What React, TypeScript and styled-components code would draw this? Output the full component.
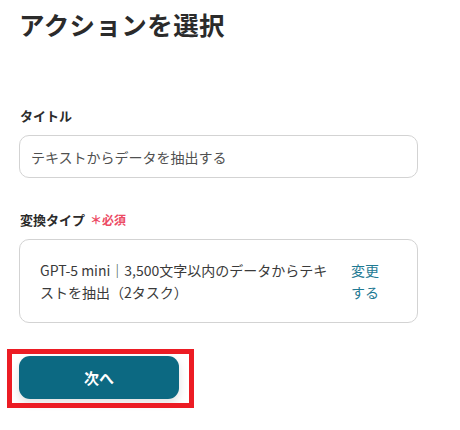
import React from "react";
import styled, { createGlobalStyle } from "styled-components";

const GlobalStyle = createGlobalStyle`
  html, body {
    margin: 0;
    padding: 0;
    background: #ffffff;
  }
  body {
    font-family: "Noto Sans CJK JP", "Noto Sans", sans-serif;
    color: #2b2b2b;
  }
`;

const Page = styled.div`
  width: 460px;
  height: 430px;
  padding: 6px 42px 0 19px;
  box-sizing: border-box;
  display: flex;
  flex-direction: column;
`;

const Title = styled.h1`
  margin: 0;
  font-size: 25.5px;
  line-height: 36px;
  font-weight: 700;
  color: #2b2b2b;
  letter-spacing: 0.4px;
`;

const Field = styled.div<{ $top: number }>`
  display: flex;
  flex-direction: column;
  margin-top: ${(p) => p.$top}px;
`;

const Label = styled.div`
  display: flex;
  align-items: center;
  gap: 5px;
  font-size: 13px;
  line-height: 20px;
  font-weight: 700;
  color: #2b2b2b;
  padding-left: 1px;
`;

const Required = styled.span`
  font-size: 12px;
  font-weight: 700;
  color: #ec4a63;
`;

const TextBox = styled.div`
  margin-top: 9px;
  height: 43px;
  border: 1px solid #d3d3d3;
  border-radius: 10px;
  box-sizing: border-box;
  display: flex;
  align-items: center;
  padding: 0 11px;
  font-size: 14px;
  color: #505050;
`;

const SelectBox = styled.div`
  margin-top: 9px;
  height: 84px;
  border: 1px solid #d3d3d3;
  border-radius: 10px;
  box-sizing: border-box;
  display: flex;
  align-items: center;
  padding: 0 36px 0 20px;
  gap: 16px;
`;

const SelectText = styled.div`
  flex: 1;
  font-size: 14px;
  line-height: 22px;
  color: #3a3a3a;
`;

const ChangeLink = styled.a`
  width: 30px;
  font-size: 14px;
  line-height: 22px;
  color: #1f7a93;
  text-decoration: none;
  cursor: pointer;
`;

const ButtonArea = styled.div`
  position: relative;
  margin-top: 33px;
  align-self: flex-start;
`;

const NextButton = styled.button`
  width: 160px;
  height: 43px;
  border: none;
  border-radius: 11px;
  background: #0c6982;
  color: #ffffff;
  font-family: "Noto Sans CJK JP", "Noto Sans", sans-serif;
  font-size: 15px;
  font-weight: 700;
  box-shadow: 0 4px 10px rgba(0, 0, 0, 0.12);
  cursor: pointer;
`;

const Highlight = styled.div`
  position: absolute;
  left: -12px;
  top: -7px;
  width: 187px;
  height: 59px;
  box-sizing: border-box;
  border: 5px solid #ec1c24;
  pointer-events: none;
`;

export default function App() {
  return (
    <>
      <GlobalStyle />
      <Page>
        <Title>アクションを選択</Title>
        <Field $top={64}>
          <Label>タイトル</Label>
          <TextBox>テキストからデータを抽出する</TextBox>
        </Field>
        <Field $top={32}>
          <Label>
            変換タイプ<Required>＊必須</Required>
          </Label>
          <SelectBox>
            <SelectText>
              GPT-5 mini｜3,500文字以内のデータからテキストを抽出（2タスク）
            </SelectText>
            <ChangeLink>変更する</ChangeLink>
          </SelectBox>
        </Field>
        <ButtonArea>
          <NextButton>次へ</NextButton>
          <Highlight />
        </ButtonArea>
      </Page>
    </>
  );
}
